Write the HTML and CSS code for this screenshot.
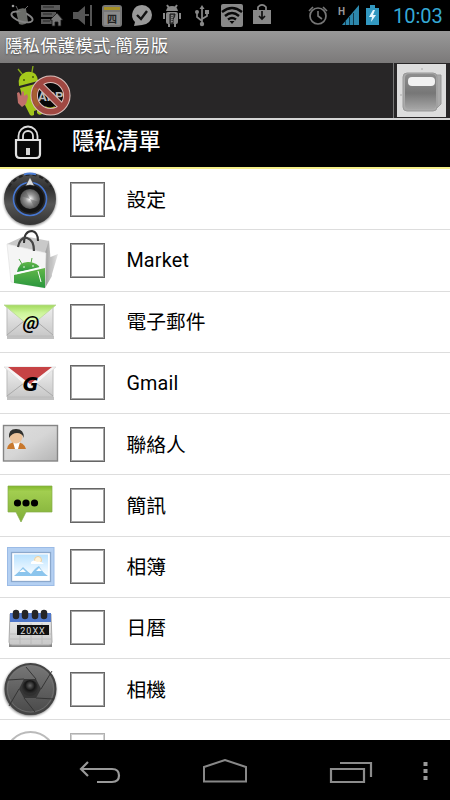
FILE: index.html
```html
<!doctype html>
<html lang="zh-Hant">
    <head>
        <meta charset="utf-8">
        <title>隱私保護模式-簡易版</title>
        <link rel="stylesheet" href="styles.css">
    </head>
    <body>
        <div class="phone">
            <div class="status">
                <div class="notices">
                    <svg viewBox="0 0 30 31"><path d="M9 11q5-4 10-2l2 13q-4 4-9 2z" fill="#6b6d69"/><path d="M11 10l-2-4M18 9l3-3" stroke="#666"/><ellipse cx="15" cy="17" rx="11" ry="4.5" transform="rotate(17 15 17)" fill="none" stroke="#858585" stroke-width="1.8"/><path d="M11 12q5-2 8 0l1 6-8-1z" fill="#6b6d69"/><circle cx="6" cy="6" r="1.3" fill="#999"/></svg>
                    <svg viewBox="0 0 30 31"><path d="M4 5h19v5H4zM4 12h15v5H4zM4 19h12v5H4z" fill="#595959"/><path d="M6 7h11M6 14h9M6 21h7" stroke="#292929"/><path d="M13 20l7-7 6 7h-2v6h-3v-4h-3v4h-3v-6z" fill="#777" stroke="#1b1b1b" stroke-width=".8"/></svg>
                    <svg viewBox="0 0 30 31"><path d="M6 12h5l7-6v19l-7-6H6z" fill="#555"/><path d="M24 5v21M18 15h4" stroke="#555" stroke-width="2"/></svg>
                    <svg viewBox="0 0 30 31"><rect x="5" y="5" width="20" height="22" rx="3" fill="#777"/><rect x="7" y="7" width="16" height="3" fill="#a69026"/><rect x="7" y="12" width="16" height="13" fill="#8a8a8a"/><text x="10" y="23" class="day">四</text></svg>
                    <svg viewBox="0 0 30 31"><path d="M15 5a10 10 0 0 1 0 20l-8 1 1-4A10 10 0 0 1 15 5z" fill="#999"/><path d="M10 15l4 4 6-8" fill="none" stroke="#111" stroke-width="2.4"/></svg>
                    <svg viewBox="0 0 30 31"><path d="M9 11q1-5 6-5t6 5z" fill="#888"/><path d="M10 5l2 3M20 5l-2 3M7 13v6M23 13v6M12 24v3M18 24v3" stroke="#888" stroke-width="2"/><rect x="9" y="12" width="12" height="12" rx="2" fill="#888"/><path d="M13 14h5q0 3-2 5v5h-3z" fill="#555" stroke="#161616"/><path d="M15 15v8" stroke="#bbb" stroke-dasharray="1 1"/></svg>
                    <svg viewBox="0 0 30 31"><path d="M15 8v17M15 21l-5-4v-4M15 19l5-3v-4" fill="none" stroke="#888" stroke-width="1.7"/><path d="M12.5 9L15 5l2.5 4zM18 10h4v4h-4z" fill="#888"/><circle cx="10" cy="12" r="2" fill="#888"/><circle cx="15" cy="24" r="2.2" fill="#888"/></svg>
                    <svg viewBox="0 0 30 31"><rect x="4" y="4" width="22" height="23" rx="2" fill="#888"/><g fill="none" stroke="#080808" stroke-width="2.4"><path d="M5 12q10-8 20 0M8 16q7-6 14 0M11 19.500q4-3 8 0"/></g><path d="M12.500 21h5L15 24z" fill="#080808"/></svg>
                    <svg viewBox="0 0 30 31"><path d="M6 10h18v14H6z" fill="#888"/><path d="M11 10V7q4-4 8 0v3" fill="none" stroke="#888" stroke-width="1.7"/><path d="M15 11v8M12 16l3 3 3-3" fill="none" stroke="#111" stroke-width="1.7"/></svg>
                </div>
                <div class="system">
                    <svg class="alarm" viewBox="0 0 22 31"><circle cx="11" cy="16" r="8" fill="none" stroke="#777" stroke-width="1.7"/><path d="M2 11l4-4M20 11l-4-4M11 11v5l4 3" fill="none" stroke="#777" stroke-width="1.6"/></svg>
                    <svg class="signal" viewBox="0 0 22 31"><path d="M4 25L21 5v20z" fill="#2d88ad"/><path d="M7.500 21v4M11.500 17v8M15.500 13v12" stroke="#12384a"/><text x="0" y="15" class="net">H</text></svg>
                    <svg class="battery" viewBox="0 0 13 31"><path d="M0 8h4V5h5v3h4v17H0z" fill="#3298c1"/><path d="M7 10l-4 7h3l-1 5 5-7H7l2-5z" fill="#e8f8ff"/></svg>
                    <span class="clock">10:03</span>
                </div>
            </div>

            <div class="title">隱私保護模式-簡易版</div>

            <div class="toolbar">
                <svg class="logo" viewBox="0 0 60 55">
                    <path d="M11 11l-4-5M21 9l1-6" stroke="#86a719" stroke-width="1.400"/>
                    <path d="M8 23Q6 12 15 9q11-2 12 9z" fill="#a4c91b"/>
                    <path d="M9 25l19-5 8 26-5 1v4q-3 2-5-1v-3l-3 1v4q-4 2-5-2l-5-10z" fill="#a1c41a"/>
                    <circle cx="13" cy="17" r="1" fill="#46590c"/><circle cx="22" cy="14" r="1" fill="#46590c"/>
                    <path d="M6 30l2-1 2 4 1-5 2 1v4l3-2 1 3-2 7-4 3-4-4z" fill="#c0706b"/>
                    <circle cx="39.500" cy="32.500" r="15" fill="#080808"/>
                    <text x="27" y="38" class="app">APP</text>
                    <path d="M34 44q5 3 10 0" stroke="#b4bd19" stroke-width="2" fill="none"/>
                    <g fill="none" stroke="#d9c1bd" stroke-width="7.500"><circle cx="39.500" cy="32.500" r="16.300"/><path d="M28 21l23 23"/></g>
                    <g fill="none" stroke="#a04842" stroke-width="5.500"><circle cx="39.500" cy="32.500" r="16.300"/><path d="M28 21l23 23"/></g>
                    <path d="M25 25q-4 9 2 18" fill="none" stroke="#a86a2a" stroke-width="4" opacity=".7"/>
                </svg>
                <div class="exit">
                    <svg viewBox="0 0 49 53">
                        <defs>
                            <linearGradient id="cover" x2="0" y2="1"><stop stop-color="#8e8e8e"/><stop offset=".55" stop-color="#777"/><stop offset="1" stop-color="#a5a5a5"/></linearGradient>
                        </defs>
                        <path d="M39 11h5v29l-4 4h-3z" fill="#aaa" stroke="#999"/>
                        <rect x="6" y="9" width="34" height="38" rx="4" fill="#aaa" stroke="#999"/>
                        <rect x="8" y="10" width="31" height="35" rx="4" fill="url(#cover)"/>
                        <rect x="11" y="13" width="27" height="9" rx="4" fill="#f1f1f1"/>
                        <circle cx="25" cy="5" r="1" fill="#bbb"/><circle cx="4" cy="31" r="1" fill="#bbb"/>
                    </svg>
                </div>
            </div>

            <div class="header">
                <svg class="lock" viewBox="0 0 28 36">
                    <path d="M4.500 15v-4a9.500 9.500 0 0 1 19 0v4M9 15v-4a5 5 0 0 1 10 0v4" fill="none" stroke="#ddd" stroke-width="1.800"/>
                    <path d="M2 15h24v14q0 4-4 4H6q-4 0-4-4z" fill="#080808" stroke="#e1e1e1" stroke-width="2.200"/>
                    <path d="M14 23v7" stroke="#d5d5d5" stroke-width="4"/>
                </svg>
                <span>隱私清單</span>
            </div>

            <div class="list">
                <div class="item">
                    <svg viewBox="0 0 60 60">
                        <defs>
                            <linearGradient id="dial" x2="0" y2="1"><stop stop-color="#525252"/><stop offset=".3" stop-color="#303030"/><stop offset=".6" stop-color="#555"/><stop offset="1" stop-color="#333"/></linearGradient>
                            <radialGradient id="metal"><stop stop-color="#fff"/><stop offset=".45" stop-color="#999"/><stop offset="1" stop-color="#555"/></radialGradient>
                            <radialGradient id="shade"><stop offset=".85" stop-color="#777"/><stop offset="1" stop-color="#fff" stop-opacity="0"/></radialGradient>
                        </defs>
                        <circle cx="30" cy="31" r="29" fill="url(#shade)"/>
                        <circle cx="30" cy="30" r="26" fill="url(#dial)"/>
                        <path d="M9 18a24 24 0 0 1 42 0" fill="none" stroke="#222" stroke-width="2" stroke-dasharray="4 3"/>
                        <path d="M24 5.500q6-2 12 0" fill="none" stroke="#4c7fda" stroke-width="1.800"/>
                        <circle cx="30" cy="30" r="16.500" fill="#292929" stroke="#4777d1" stroke-width="1.600"/>
                        <circle cx="30" cy="30" r="14" fill="#141414"/>
                        <circle cx="30" cy="30" r="10" fill="url(#metal)"/>
                        <path d="M30 30l-9-3q1-4 4-6zM30 30l9 3q-1 4-4 6z" fill="#555" opacity=".4"/>
                        <path d="M30 8l-4.500 9q4.500-2 9 0z" fill="#ddd" stroke="#333" stroke-width=".6"/>
                    </svg>
                    <span class="check"></span>
                    <span class="name">設定</span>
                </div>
                <div class="item">
                    <svg viewBox="0 0 60 60">
                        <defs>
                            <linearGradient id="side"><stop stop-color="#999"/><stop offset="1" stop-color="#ccc"/></linearGradient>
                            <linearGradient id="fall"><stop stop-color="#888"/><stop offset="1" stop-color="#ddd"/></linearGradient>
                            <linearGradient id="droid" x2="0" y2="1"><stop stop-color="#62b749"/><stop offset="1" stop-color="#29963e"/></linearGradient>
                        </defs>
                        <path d="M48 28l10-4-6 20-7 13z" fill="url(#fall)" opacity=".8"/>
                        <path d="M7 14l17-8 25 5-3 12z" fill="#c9c9c9"/>
                        <path d="M24 13q0-12 8-12 6 1 6 10" fill="none" stroke="#333" stroke-width="2"/>
                        <path d="M49 10l3 36-7 12V23z" fill="url(#side)"/>
                        <path d="M7 14l39 9-1 35-34-6z" fill="#f5f5f5" stroke="#ddd" stroke-width=".6"/>
                        <path d="M17 42q2-11 12-10 9 1 11 6z" fill="url(#droid)"/>
                        <path d="M14 45l31-7v20l-31-5z" fill="url(#droid)"/>
                        <path d="M16 43.500l25-6" stroke="#fff" stroke-width="1.300"/>
                        <path d="M22 34l-3-5M31 33l1-5" stroke="#52a744"/>
                        <path d="M38 41l3 11" stroke="#fff"/>
                        <circle cx="24" cy="37" r=".8" fill="#fff"/><circle cx="33" cy="36" r=".8" fill="#fff"/>
                        <path d="M18 17q2-10 9-9 7 2 7 13" fill="none" stroke="#454545" stroke-width="2.200"/>
                    </svg>
                    <span class="check"></span>
                    <span class="name en">Market</span>
                </div>
                <div class="item">
                    <svg viewBox="0 0 60 60">
                        <defs>
                            <linearGradient id="paper" x2="0" y2="1"><stop stop-color="#efefef"/><stop offset="1" stop-color="#c8c8c8"/></linearGradient>
                            <linearGradient id="flap" x2="0" y2="1"><stop stop-color="#a2d95d"/><stop offset=".4" stop-color="#cdf59a"/><stop offset="1" stop-color="#e6ffc5"/></linearGradient>
                        </defs>
                        <path d="M7 44h47v3H7z" fill="#999" opacity=".6"/>
                        <path d="M7 14h46v30H7z" fill="url(#paper)" stroke="#bbb"/>
                        <path d="M7 43l17-14M53 43L36 29" stroke="#aaa"/>
                        <path d="M4 13h52L33 32q-3 2-6 0z" fill="url(#flap)" stroke="#b9d994" stroke-width=".8"/>
                        <text x="31" y="37" class="at">@</text>
                    </svg>
                    <span class="check"></span>
                    <span class="name">電子郵件</span>
                </div>
                <div class="item">
                    <svg viewBox="0 0 60 60">
                        <path d="M7 44h47v3H7z" fill="#999" opacity=".6"/>
                        <path d="M7 15h46v29H7z" fill="url(#paper)" stroke="#bbb"/>
                        <path d="M7 43l17-13M53 43L36 30" stroke="#aaa"/>
                        <path d="M4 14h52L33 34q-3 2-6 0z" fill="#f6f4f4" stroke="#ddd" stroke-width=".8"/>
                        <path d="M8 14h44L30 31z" fill="#c64345"/>
                        <text x="30.500" y="38" class="g">G</text>
                    </svg>
                    <span class="check"></span>
                    <span class="name en">Gmail</span>
                </div>
                <div class="item">
                    <svg viewBox="0 0 60 60">
                        <defs>
                            <linearGradient id="card" x2="1" y2="1"><stop stop-color="#ddd"/><stop offset=".5" stop-color="#d6d6d6"/><stop offset="1" stop-color="#b5b5b5"/></linearGradient>
                        </defs>
                        <rect x="3.500" y="11.500" width="54" height="35.500" fill="url(#card)" stroke="#858585" stroke-width="1.400"/>
                        <path d="M7 35q1-7 9-7t10 7z" fill="#c8782d"/>
                        <path d="M13 28h7l-2 7h-3z" fill="#fff"/>
                        <circle cx="16" cy="23" r="6.500" fill="#ecc39b"/>
                        <path d="M9 24q-1-9 7-9t8 9q-2-5-7-5-5 0-8 5z" fill="#30302d"/>
                    </svg>
                    <span class="check"></span>
                    <span class="name">聯絡人</span>
                </div>
                <div class="item">
                    <svg viewBox="0 0 60 60">
                        <defs>
                            <linearGradient id="bubble" x2="0" y2="1"><stop stop-color="#81b72b"/><stop offset=".15" stop-color="#a2ce50"/><stop offset="1" stop-color="#80ae38"/></linearGradient>
                        </defs>
                        <path d="M8 11h44v26H26l-5 10-5-10H8z" fill="url(#bubble)" stroke="#84ac49" stroke-width=".7"/>
                        <circle cx="17.500" cy="28" r="3.600"/><circle cx="26" cy="28" r="3.600"/><circle cx="34.500" cy="28" r="3.600"/>
                    </svg>
                    <span class="check"></span>
                    <span class="name">簡訊</span>
                </div>
                <div class="item">
                    <svg viewBox="0 0 60 60">
                        <defs>
                            <linearGradient id="sky" x2="0" y2="1"><stop stop-color="#b9e2ff"/><stop offset="1" stop-color="#fff"/></linearGradient>
                        </defs>
                        <rect x="7.500" y="10.500" width="46.500" height="38" fill="#b4d0f2" stroke="#9bbbe6"/>
                        <rect x="11.500" y="15.500" width="39" height="29" fill="#fff" stroke="#8ba8cc" stroke-width="1.300"/>
                        <rect x="14" y="17.500" width="34" height="22" fill="url(#sky)"/>
                        <path d="M14 39q4-3 9-9 5 5 8 7 4-6 8-8 4 7 9 10z" fill="#8cc5ed"/>
                        <path d="M19 35l4-3 3 3zM36 34l3-3 3 3z" fill="#fff"/>
                        <circle cx="38" cy="23" r="3.500" fill="#fff3d9" stroke="#eed0a0"/>
                        <path d="M31 25q3-3 6 0 4-1 7 2H31z" fill="#fff"/>
                    </svg>
                    <span class="check"></span>
                    <span class="name">相簿</span>
                </div>
                <div class="item">
                    <svg viewBox="0 0 60 60">
                        <path d="M9 46h43v3H9z" fill="#555" opacity=".7"/>
                        <path d="M10 16h41l1 28q0 3-3 3H12q-3 0-3-3z" fill="url(#paper)" stroke="#aaa"/>
                        <path d="M10 15h41v9H10z" fill="#5078ca"/>
                        <path d="M16 15v3M25 15v3M35 15v3M44 15v3" stroke="#252525" stroke-width="6.500" stroke-linecap="round"/>
                        <path d="M10 36h41M10 41h41M20 25v21M31 25v21M42 25v21" stroke="#aaa" opacity=".5"/>
                        <path d="M17 27h32v10H17z" fill="#111"/>
                        <text x="33" y="35.500" class="year">20XX</text>
                    </svg>
                    <span class="check"></span>
                    <span class="name">日暦</span>
                </div>
                <div class="item">
                    <svg viewBox="0 0 60 60">
                        <defs>
                            <linearGradient id="lens" x2="0" y2="1"><stop stop-color="#787878"/><stop offset="1" stop-color="#494949"/></linearGradient>
                            <radialGradient id="hole" cy=".35"><stop stop-color="#666"/><stop offset=".6" stop-color="#161616"/><stop offset="1" stop-color="#303030"/></radialGradient>
                        </defs>
                        <circle cx="30" cy="31" r="29" fill="url(#shade)"/>
                        <circle cx="30.500" cy="30" r="25" fill="url(#lens)" stroke="#444" stroke-width="2"/>
                        <circle cx="30.500" cy="30" r="23" fill="none" stroke="#777" stroke-width=".7"/>
                        <path d="M36 20l-10-12M41 30l11-18M36 39l18 1M24 39l11 14M19 30L9 47M24 20L8 21" stroke="#303030" stroke-width=".9"/>
                        <path d="M24 20h12l5 10-5 9H24l-5-9z" fill="#373737"/>
                        <circle cx="30" cy="29" r="8" fill="url(#hole)"/>
                    </svg>
                    <span class="check"></span>
                    <span class="name">相機</span>
                </div>
                <div class="item fade">
                    <svg viewBox="0 0 60 60"><circle cx="30.500" cy="37" r="25" fill="#fff" stroke="#777" stroke-width="2"/></svg>
                    <span class="check"></span>
                </div>
            </div>

            <div class="nav">
                <svg class="back" viewBox="0 0 44 26"><path d="M10 2L3 9l7 7M3 9h31q7 0 7 6.500T34 22H19" fill="none" stroke="#999" stroke-width="2.200"/></svg>
                <svg class="home" viewBox="0 0 48 26"><path d="M3 22.500V8l21-7 21 7v14.500z" fill="none" stroke="#888" stroke-width="2"/></svg>
                <svg class="recent" viewBox="0 0 44 24"><path d="M2 9h33v13H2zM11 3h31v14" fill="none" stroke="#8c8c8c" stroke-width="2.200"/></svg>
                <svg class="more" viewBox="0 0 5 20"><path d="M.5 1h4v4h-4zM.5 8h4v4h-4zM.5 15h4v4h-4z" fill="#999"/></svg>
            </div>
        </div>
    </body>
</html>
```
FILE: styles.css
```css
body {
    margin: 0;
    font-family: Roboto, "Noto Sans CJK TC", sans-serif;
}
svg {
    display: block;
    flex: none;
}
.phone {
    width: 450px;
    height: 800px;
    display: flex;
    flex-direction: column;
    overflow: hidden;
    background-color: #fff;
}
/* 状态栏 */
.status {
    height: 31px;
    flex: none;
    display: flex;
    justify-content: space-between;
    background-color: #000;
}
.notices {
    display: flex;
    padding-left: 7px;
}
.notices svg {
    width: 30px;
    height: 31px;
}
.system {
    display: flex;
    padding-right: 7px;
}
.system svg {
    height: 31px;
}
.alarm {
    width: 22px;
    margin-right: 9px;
}
.signal {
    width: 22px;
    margin-right: 6px;
}
.battery {
    width: 13px;
}
.clock {
    width: 50px;
    margin-left: 14px;
    line-height: 32px;
    font-size: 20px;
    color: #35a9d5;
    white-space: nowrap;
}
.day {
    font-size: 10px;
    font-weight: bold;
    fill: #222;
}
.net {
    font-size: 10px;
    font-weight: bold;
    fill: #999;
}
.title {
    height: 32px;
    flex: none;
    box-sizing: border-box;
    padding-left: 5px;
    line-height: 30px;
    font-size: 17.3px;
    letter-spacing: 0.3px;
    color: #fff;
    text-shadow: 0 1px 2px #444;
    background: linear-gradient(#999, #7b7979);
}
/* 工具栏 */
.toolbar {
    height: 57px;
    flex: none;
    box-sizing: border-box;
    display: flex;
    justify-content: space-between;
    border-bottom: 2px solid #d5d5d5;
    background-color: #282627;
}
.logo {
    width: 60px;
    height: 55px;
    margin-left: 11px;
}
.exit {
    padding: 1px 4px 0 3px;
    border-left: 1px solid #777;
}
.exit svg {
    width: 49px;
    height: 53px;
    background-color: #ddd;
}
.app {
    font-size: 13px;
    font-weight: bold;
    fill: #bbb;
}
.header {
    height: 49px;
    flex: none;
    box-sizing: border-box;
    display: flex;
    color: #fff;
    font-size: 22.2px;
    font-weight: 500;
    line-height: 43px;
    border-bottom: 2px solid #f4f08b;
    background-color: #000;
}
.lock {
    width: 28px;
    height: 36px;
    margin: 5px 30px 0 14px;
}
/* 列表 */
.list {
    height: 571px;
    flex: none;
    overflow: hidden;
}
.item {
    height: 61.25px;
    box-sizing: border-box;
    display: flex;
    align-items: center;
    border-bottom: 1px solid #ddd;
}
.item svg {
    width: 60px;
    height: 60px;
}
.check {
    width: 35px;
    height: 35px;
    flex: none;
    box-sizing: border-box;
    margin: 0 21px 0 10.4px;
    border: 1px solid #666;
    box-shadow: inset 0 0 0 1px #a5a5a5;
}
.name {
    padding-bottom: 2px;
    font-size: 19.8px;
    color: #000;
}
.en {
    padding: 1px 0 0;
    letter-spacing: 0.2px;
}
.fade {
    opacity: 0.5;
}
.at {
    font-size: 19px;
    font-weight: bold;
    font-style: italic;
    text-anchor: middle;
}
.g {
    font-family: "DejaVu Sans", sans-serif;
    font-size: 19px;
    font-weight: bold;
    font-style: italic;
    text-anchor: middle;
}
.year {
    font-size: 9px;
    fill: #ddd;
    letter-spacing: 1px;
    text-anchor: middle;
}
/* 底部导航 */
.nav {
    height: 60px;
    flex: none;
    display: flex;
    background-color: #000;
}
.back {
    width: 44px;
    height: 26px;
    margin: 20px 0 0 78px;
}
.home {
    width: 48px;
    height: 26px;
    margin: 19px 0 0 79px;
}
.recent {
    width: 44px;
    height: 24px;
    margin: 20px 0 0 80px;
}
.more {
    width: 5px;
    height: 20px;
    margin: 21px 0 0 50px;
}
```
